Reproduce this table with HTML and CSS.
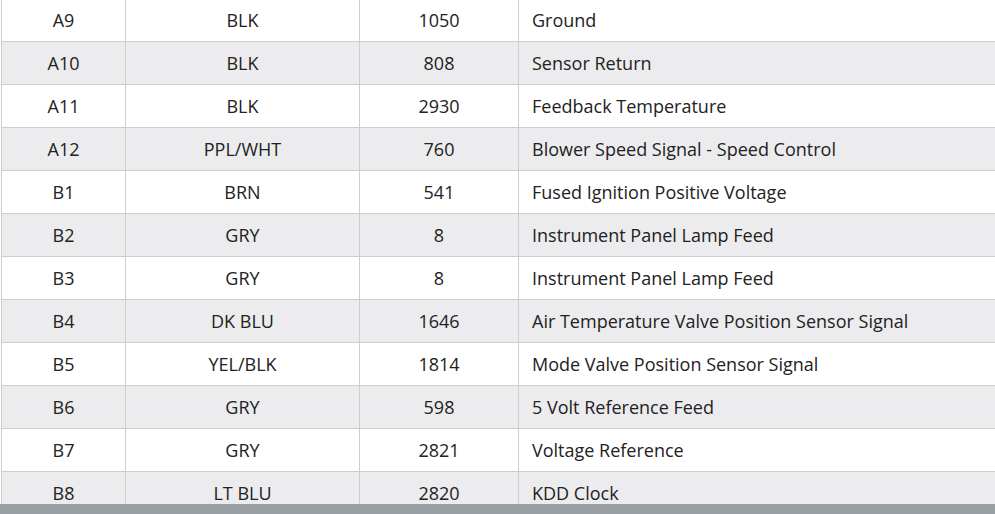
FILE: index.html
```html
<!DOCTYPE html>
<html>
<head>
<meta charset="utf-8">
<link rel="stylesheet" href="styles.css">
</head>
<body>
<div class="viewport">
<table class="pins">
<colgroup><col class="c1"><col class="c2"><col class="c3"><col class="c4"></colgroup>
<tbody>
<tr><td>A9</td><td>BLK</td><td>1050</td><td class="desc">Ground</td></tr>
<tr><td>A10</td><td>BLK</td><td>808</td><td class="desc">Sensor Return</td></tr>
<tr><td>A11</td><td>BLK</td><td>2930</td><td class="desc">Feedback Temperature</td></tr>
<tr><td>A12</td><td>PPL/WHT</td><td>760</td><td class="desc">Blower Speed Signal - Speed Control</td></tr>
<tr><td>B1</td><td>BRN</td><td>541</td><td class="desc">Fused Ignition Positive Voltage</td></tr>
<tr><td>B2</td><td>GRY</td><td>8</td><td class="desc">Instrument Panel Lamp Feed</td></tr>
<tr><td>B3</td><td>GRY</td><td>8</td><td class="desc">Instrument Panel Lamp Feed</td></tr>
<tr><td>B4</td><td>DK BLU</td><td>1646</td><td class="desc">Air Temperature Valve Position Sensor Signal</td></tr>
<tr><td>B5</td><td>YEL/BLK</td><td>1814</td><td class="desc">Mode Valve Position Sensor Signal</td></tr>
<tr><td>B6</td><td>GRY</td><td>598</td><td class="desc">5 Volt Reference Feed</td></tr>
<tr><td>B7</td><td>GRY</td><td>2821</td><td class="desc">Voltage Reference</td></tr>
<tr><td>B8</td><td>LT BLU</td><td>2820</td><td class="desc">KDD Clock</td></tr>
</tbody>
</table>
</div>
<div class="bottombar"></div>
</body>
</html>
```

FILE: styles.css
```css
html, body {
  margin: 0;
  padding: 0;
  background: #fff;
}
.viewport {
  height: 504px;
  overflow: hidden;
}
.pins {
  margin-top: -2px;
  margin-left: 1px;
  width: 1010px;
  border-collapse: collapse;
  table-layout: fixed;
  font-family: "Open Sans", "Noto Sans", sans-serif;
  font-size: 18px;
  color: #222;
}
.c1 { width: 124px; }
.c2 { width: 234px; }
.c3 { width: 159px; }
.c4 { width: auto; }
.pins td {
  height: 42px;
  padding: 0 13px;
  border: 1px solid #cdcdcd;
  text-align: center;
  vertical-align: middle;
  white-space: nowrap;
}
.pins td.desc {
  text-align: left;
}
.pins tr:nth-child(even) td {
  background: #ececee;
}
.bottombar {
  height: 10px;
  background: #9a9fa3;
}
```
